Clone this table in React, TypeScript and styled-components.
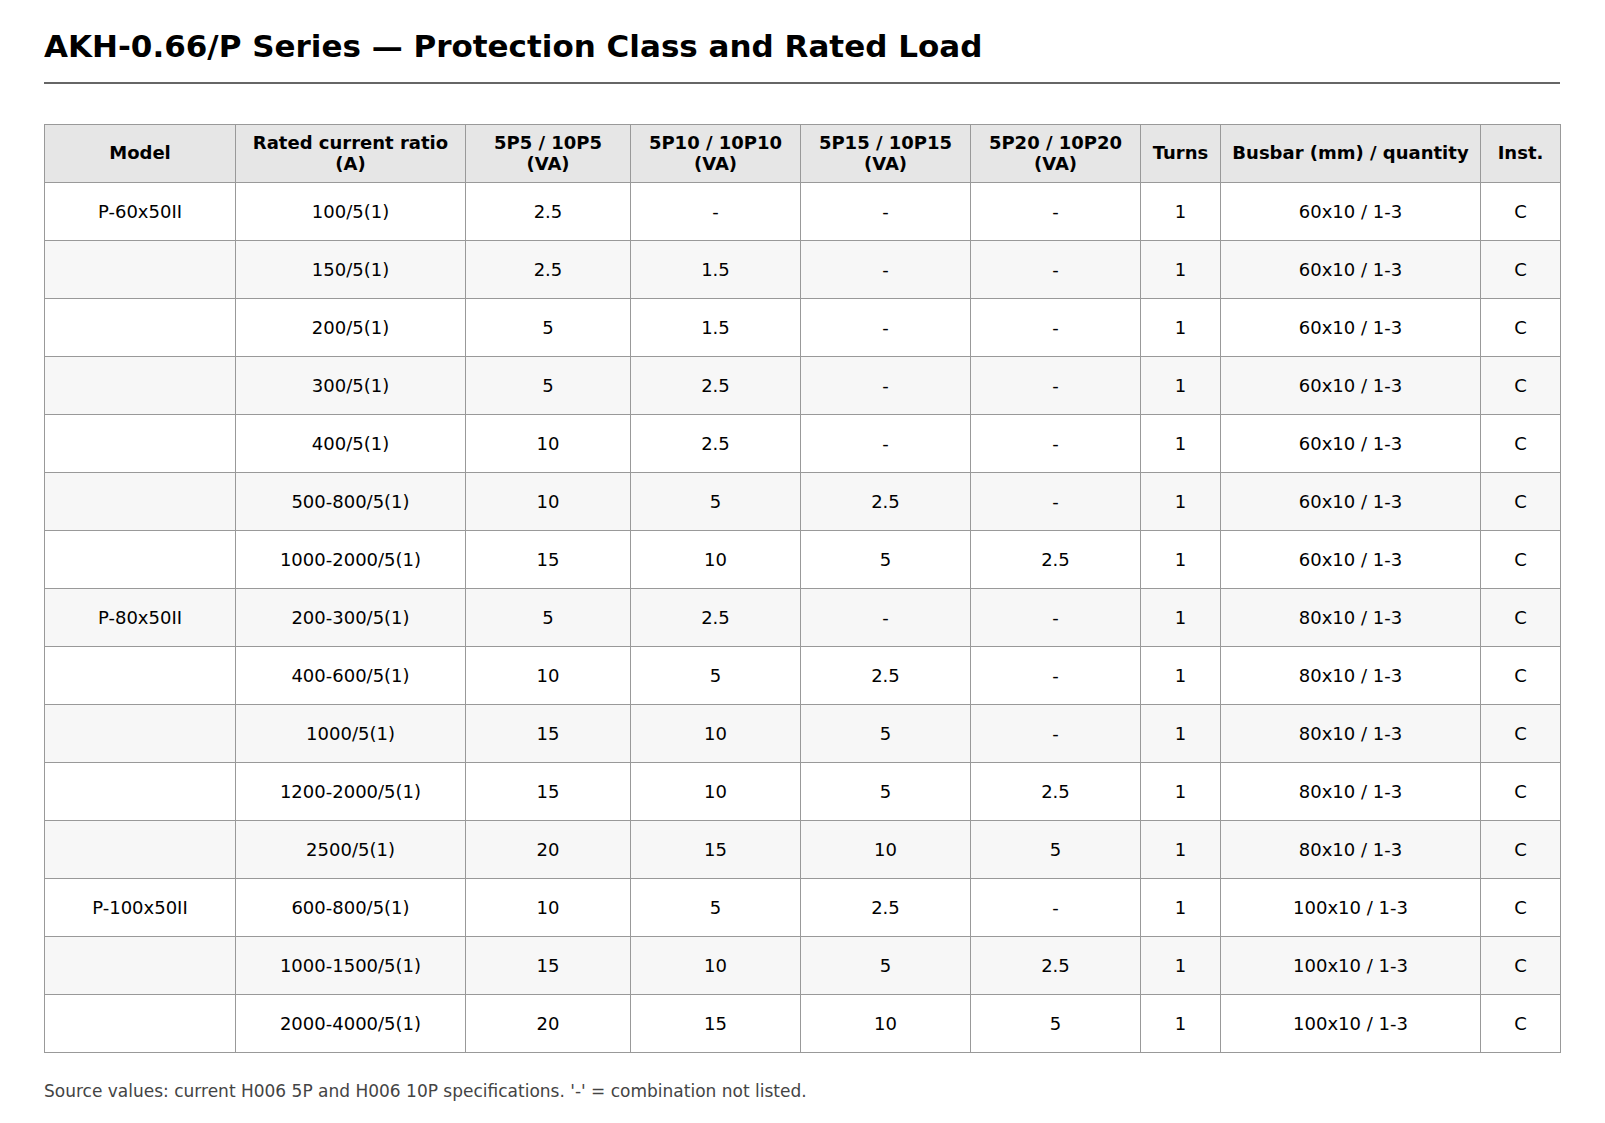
import React from "react";
import styled, { createGlobalStyle } from "styled-components";

const GlobalStyle = createGlobalStyle`
  html, body {
    margin: 0;
    padding: 0;
    background: #ffffff;
  }
  body {
    font-family: "DejaVu Sans", "Liberation Sans", sans-serif;
    color: #000;
  }
`;

type Row = {
  model: string;
  ratio: string;
  p5: string;
  p10: string;
  p15: string;
  p20: string;
  turns: string;
  busbar: string;
  inst: string;
};

const rows: Row[] = [
  { model: "P-60x50II", ratio: "100/5(1)", p5: "2.5", p10: "-", p15: "-", p20: "-", turns: "1", busbar: "60x10 / 1-3", inst: "C" },
  { model: "", ratio: "150/5(1)", p5: "2.5", p10: "1.5", p15: "-", p20: "-", turns: "1", busbar: "60x10 / 1-3", inst: "C" },
  { model: "", ratio: "200/5(1)", p5: "5", p10: "1.5", p15: "-", p20: "-", turns: "1", busbar: "60x10 / 1-3", inst: "C" },
  { model: "", ratio: "300/5(1)", p5: "5", p10: "2.5", p15: "-", p20: "-", turns: "1", busbar: "60x10 / 1-3", inst: "C" },
  { model: "", ratio: "400/5(1)", p5: "10", p10: "2.5", p15: "-", p20: "-", turns: "1", busbar: "60x10 / 1-3", inst: "C" },
  { model: "", ratio: "500-800/5(1)", p5: "10", p10: "5", p15: "2.5", p20: "-", turns: "1", busbar: "60x10 / 1-3", inst: "C" },
  { model: "", ratio: "1000-2000/5(1)", p5: "15", p10: "10", p15: "5", p20: "2.5", turns: "1", busbar: "60x10 / 1-3", inst: "C" },
  { model: "P-80x50II", ratio: "200-300/5(1)", p5: "5", p10: "2.5", p15: "-", p20: "-", turns: "1", busbar: "80x10 / 1-3", inst: "C" },
  { model: "", ratio: "400-600/5(1)", p5: "10", p10: "5", p15: "2.5", p20: "-", turns: "1", busbar: "80x10 / 1-3", inst: "C" },
  { model: "", ratio: "1000/5(1)", p5: "15", p10: "10", p15: "5", p20: "-", turns: "1", busbar: "80x10 / 1-3", inst: "C" },
  { model: "", ratio: "1200-2000/5(1)", p5: "15", p10: "10", p15: "5", p20: "2.5", turns: "1", busbar: "80x10 / 1-3", inst: "C" },
  { model: "", ratio: "2500/5(1)", p5: "20", p10: "15", p15: "10", p20: "5", turns: "1", busbar: "80x10 / 1-3", inst: "C" },
  { model: "P-100x50II", ratio: "600-800/5(1)", p5: "10", p10: "5", p15: "2.5", p20: "-", turns: "1", busbar: "100x10 / 1-3", inst: "C" },
  { model: "", ratio: "1000-1500/5(1)", p5: "15", p10: "10", p15: "5", p20: "2.5", turns: "1", busbar: "100x10 / 1-3", inst: "C" },
  { model: "", ratio: "2000-4000/5(1)", p5: "20", p10: "15", p15: "10", p20: "5", turns: "1", busbar: "100x10 / 1-3", inst: "C" },
];

const columns: { label: React.ReactNode; width: number }[] = [
  { label: "Model", width: 191 },
  { label: <>Rated current ratio<br />(A)</>, width: 230 },
  { label: <>5P5 / 10P5<br />(VA)</>, width: 165 },
  { label: <>5P10 / 10P10<br />(VA)</>, width: 170 },
  { label: <>5P15 / 10P15<br />(VA)</>, width: 170 },
  { label: <>5P20 / 10P20<br />(VA)</>, width: 170 },
  { label: "Turns", width: 80 },
  { label: "Busbar (mm) / quantity", width: 260 },
  { label: "Inst.", width: 80 },
];

const Page = styled.main`
  padding: 28px 44px 30px 44px;
  width: 1516px;
`;

const Title = styled.h1`
  margin: 0;
  font-size: 31px;
  font-weight: bold;
  padding-bottom: 18px;
  border-bottom: 2px solid #666666;
`;

const Table = styled.table`
  margin-top: 40px;
  width: 1516px;
  table-layout: fixed;
  border-collapse: collapse;
  font-size: 18px;
`;

const HeadRow = styled.tr`
  height: 58px;
`;

const HeadCell = styled.th`
  background: #e6e6e6;
  border: 1px solid #999999;
  padding: 6px 8px 8px 8px;
  font-weight: bold;
  text-align: center;
  vertical-align: middle;
`;

const BodyRow = styled.tr`
  height: 58px;
  background: #ffffff;
  &:nth-child(even) {
    background: #f7f7f7;
  }
`;

const Cell = styled.td`
  border: 1px solid #999999;
  padding: 6px 8px;
  text-align: center;
  vertical-align: middle;
`;

const Note = styled.p`
  margin: 28px 0 0 0;
  font-size: 17px;
  color: #444444;
`;

export default function App() {
  return (
    <>
      <GlobalStyle />
      <Page>
        <Title>AKH-0.66/P Series — Protection Class and Rated Load</Title>
        <Table>
          <colgroup>
            {columns.map((c, i) => (
              <col key={i} style={{ width: c.width }} />
            ))}
          </colgroup>
          <thead>
            <HeadRow>
              {columns.map((c, i) => (
                <HeadCell key={i}>{c.label}</HeadCell>
              ))}
            </HeadRow>
          </thead>
          <tbody>
            {rows.map((r, i) => (
              <BodyRow key={i}>
                <Cell>{r.model}</Cell>
                <Cell>{r.ratio}</Cell>
                <Cell>{r.p5}</Cell>
                <Cell>{r.p10}</Cell>
                <Cell>{r.p15}</Cell>
                <Cell>{r.p20}</Cell>
                <Cell>{r.turns}</Cell>
                <Cell>{r.busbar}</Cell>
                <Cell>{r.inst}</Cell>
              </BodyRow>
            ))}
          </tbody>
        </Table>
        <Note>Source values: current H006 5P and H006 10P specifications. '-' = combination not listed.</Note>
      </Page>
    </>
  );
}
